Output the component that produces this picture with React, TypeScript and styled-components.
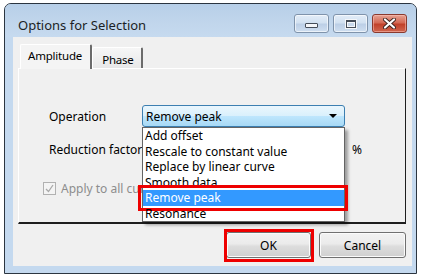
import styled, { createGlobalStyle } from "styled-components";

const GlobalStyle = createGlobalStyle`
  html, body {
    margin: 0;
    padding: 0;
    background: #fff;
  }
  body {
    font-family: "Noto Sans", "Liberation Sans", sans-serif;
    font-size: 12px;
    color: #000;
  }
`

const Window = styled.div`
  margin: 3px 0 0 4px;
  width: 413px;
  box-sizing: border-box;
  border: 1px solid #2b3540;
  border-radius: 7px 7px 0 0;
  background: #c4d9ef;
  display: flex;
  flex-direction: column;
  overflow: hidden;
`

const TitleBar = styled.div`
  height: 33px;
  display: flex;
  align-items: flex-start;
  justify-content: space-between;
  padding: 0 9px 0 13px;
  background: linear-gradient(#b7cfe8, #c1d6ec 60%, #c6daef);
  box-sizing: border-box;
`

const Title = styled.div`
  margin-top: 12px;
  font-size: 13px;
  color: #1b1f26;
`

const Caption = styled.div`
  display: flex;
  gap: 4px;
  margin-top: 10px;
`

const CapButton = styled.div<{ $close?: boolean }>`
  width: 35px;
  height: 19px;
  box-sizing: border-box;
  border-radius: 3px;
  border: 1px solid ${p => (p.$close ? "#8a3a2e" : "#7f93ab")};
  box-shadow: inset 0 0 0 1px ${p => (p.$close ? "rgba(255,200,190,.5)" : "rgba(255,255,255,.6)")};
  background: ${p =>
    p.$close
      ? "linear-gradient(#e6a293, #d46a55 45%, #c1412a 55%, #d0664f)"
      : "linear-gradient(#e3edf8, #d2e1f1 45%, #bccfe6 55%, #cfdff1)"};
  display: flex;
  align-items: center;
  justify-content: center;
`

const MinGlyph = styled.div`
  width: 11px;
  height: 3px;
  margin-top: 4px;
  border: 1px solid #454d58;
  border-radius: 1px;
  background: #f4f6f9;
`

const MaxGlyph = styled.div`
  width: 8px;
  height: 5px;
  border: 1px solid #454d58;
  border-top-width: 2px;
  box-shadow: inset 0 0 0 1px #f4f6f9, 0 0 0 1px #f4f6f9;
  background: #c9d9ec;
`

const Frame = styled.div`
  padding: 0 4px 7px 8px;
`

const Client = styled.div`
  background: #f0f0f0;
  padding: 7px 6px 8px 5px;
  display: flex;
  flex-direction: column;
`

const TabStrip = styled.div`
  display: flex;
  align-items: flex-end;
  height: 24px;
  padding-left: 2px;
  position: relative;
  z-index: 1;
`

const Tab = styled.div<{ $active?: boolean }>`
  box-sizing: border-box;
  height: ${p => (p.$active ? "25px" : "21px")};
  margin-bottom: ${p => (p.$active ? "-1px" : "0")};
  padding: ${p => (p.$active ? "3px 8px 0 7px" : "4px 7px 0 9px")};
  background: ${p => (p.$active ? "#f4f4f4" : "linear-gradient(#f6f6f6, #e8e8e8)")};
  border: 1px solid #fff;
  border-right: 2px solid #6b6b6b;
  border-bottom: none;
  border-radius: 2px 2px 0 0;
  font-size: 11.5px;
  letter-spacing: -0.2px;
`

const Panel = styled.div`
  height: 156px;
  box-sizing: border-box;
  border-top: 1px solid #fff;
  border-left: 1px solid #fff;
  border-right: 1px solid #1e1e1e;
  border-bottom: 2px solid #1e1e1e;
  background: #f0f0f0;
  padding: 36px 0 0 24px;
  display: flex;
  flex-direction: column;
`

const FormGrid = styled.div`
  display: grid;
  grid-template-columns: 93px 203px auto;
  grid-auto-rows: 22px;
  row-gap: 11px;
  align-items: center;
  padding-left: 6px;
`

const Label = styled.div`
  white-space: nowrap;
  font-size: 12px;
`

const Unit = styled(Label)`
  padding-left: 7px;
`

const ComboWrap = styled.div`
  position: relative;
  height: 22px;
  z-index: 2;
`

const Combo = styled.div`
  height: 22px;
  box-sizing: border-box;
  border: 1px solid #3c7fb1;
  border-radius: 3px;
  background: linear-gradient(#eaf6fd, #d9f0fc 50%, #bee6fd 51%, #a7d9f5);
  display: flex;
  align-items: center;
  justify-content: space-between;
  padding: 0 7px 0 3px;
`

const Arrow = styled.div`
  width: 0;
  height: 0;
  border-left: 4px solid transparent;
  border-right: 4px solid transparent;
  border-top: 4px solid #000;
`

const DropList = styled.div`
  position: absolute;
  top: 100%;
  left: 0;
  right: 0;
  background: #fff;
  border: 1px solid #646464;
  box-shadow: 3px 3px 3px rgba(0, 0, 0, 0.35);
`

const Item = styled.div<{ $selected?: boolean }>`
  height: 15.5px;
  line-height: 15.5px;
  padding-left: 2px;
  white-space: nowrap;
  position: relative;
  color: ${p => (p.$selected ? "#fff" : "#000")};
  background: ${p => (p.$selected ? "#3399ff" : "transparent")};
`

const Marker = styled.div<{ $t: number; $r: number; $b: number; $l: number }>`
  position: absolute;
  top: ${p => p.$t}px;
  right: ${p => p.$r}px;
  bottom: ${p => p.$b}px;
  left: ${p => p.$l}px;
  border: 3px solid #ee0000;
  pointer-events: none;
`

const Field = styled.div`
  height: 22px;
  border: 1px solid #abadb3;
  background: #fff;
  box-sizing: border-box;
`

const CheckRow = styled.div`
  display: flex;
  align-items: center;
  gap: 5px;
  margin-top: 20px;
  color: #8d8d8d;
  font-size: 12px;
  white-space: nowrap;
`

const CheckBox = styled.div`
  width: 13px;
  height: 13px;
  box-sizing: border-box;
  border: 1px solid #b1b1b1;
  background: #f4f4f4;
  display: flex;
  align-items: center;
  justify-content: center;
`

const ButtonRow = styled.div`
  display: flex;
  justify-content: flex-end;
  gap: 8px;
  margin-top: 8px;
`

const DlgButton = styled.div<{ $w: number }>`
  position: relative;
  width: ${p => p.$w}px;
  height: 26px;
  box-sizing: border-box;
  border: 1px solid #707070;
  border-radius: 3px;
  box-shadow: inset 0 0 0 1px #fbfbfb;
  background: linear-gradient(#f2f2f2, #ebebeb 45%, #dddddd 55%, #cfcfcf);
  display: flex;
  align-items: center;
  justify-content: center;
  font-size: 12px;
`

const ops = ["Add offset", "Rescale to constant value", "Replace by linear curve", "Smooth data", "Remove peak", "Resonance"];

export default function App() {
  return (
    <>
      <GlobalStyle />
      <Window>
        <TitleBar>
          <Title>Options for Selection</Title>
          <Caption>
            <CapButton><MinGlyph /></CapButton>
            <CapButton><MaxGlyph /></CapButton>
            <CapButton $close>
              <svg width="13" height="11" viewBox="0 0 13 11">
                <path d="M2 1.5 L11 9.5 M11 1.5 L2 9.5" stroke="#3d2420" strokeWidth="4" strokeLinecap="round" />
                <path d="M2 1.5 L11 9.5 M11 1.5 L2 9.5" stroke="#fff" strokeWidth="2.2" strokeLinecap="round" />
              </svg>
            </CapButton>
          </Caption>
        </TitleBar>
        <Frame>
          <Client>
            <TabStrip>
              <Tab $active>Amplitude</Tab>
              <Tab>Phase</Tab>
            </TabStrip>
            <Panel>
              <FormGrid>
                <Label>Operation</Label>
                <ComboWrap>
                  <Combo>
                    <span>Remove peak</span>
                    <Arrow />
                  </Combo>
                  <DropList>
                    {ops.map(o => (
                      <Item key={o} $selected={o === "Remove peak"}>
                        {o}
                        {o === "Remove peak" && <Marker $t={-5} $r={-4} $b={-5} $l={-5} />}
                      </Item>
                    ))}
                  </DropList>
                </ComboWrap>
                <span />
                <Label>Reduction factor</Label>
                <Field />
                <Unit>%</Unit>
              </FormGrid>
              <CheckRow>
                <CheckBox>
                  <svg width="9" height="9" viewBox="0 0 9 9">
                    <path d="M1 5 L3.5 7.5 L8 1" fill="none" stroke="#a9a9a9" strokeWidth="1.3" />
                  </svg>
                </CheckBox>
                Apply to all curves
              </CheckRow>
            </Panel>
            <ButtonRow>
              <DlgButton $w={85}>
                OK
                <Marker $t={-4} $r={-4} $b={-5} $l={-3} />
              </DlgButton>
              <DlgButton $w={87}>Cancel</DlgButton>
            </ButtonRow>
          </Client>
        </Frame>
      </Window>
    </>
  );
}
